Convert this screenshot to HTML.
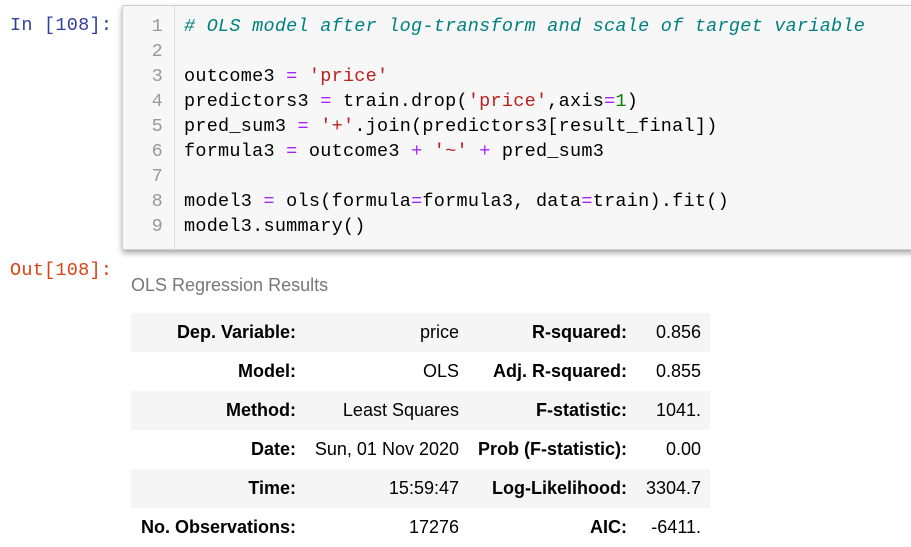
<!DOCTYPE html>
<html><head><meta charset="utf-8"><style>
body{margin:0;width:911px;height:543px;background:#fff;overflow:hidden;position:relative;font-family:"Liberation Sans",sans-serif}
.mono{font-family:"Liberation Mono",monospace;font-size:18.5px;letter-spacing:0.25px}
.prompt{position:absolute;left:10px;color:#303f9f}
.box{position:absolute;left:122px;top:5px;width:795px;height:243px;background:#f7f7f7;border:1px solid #cfcfcf;border-radius:2px;box-shadow:0 3px 6px rgba(0,0,0,.35)}
.gut{position:absolute;left:0;top:0;width:51px;height:100%;border-right:1px solid #ddd}
.ln{position:absolute;width:40px;text-align:right;color:#999;left:0}
.cl{position:absolute;left:61px;color:#000;white-space:pre}
.c{color:#008080;font-style:italic}.s{color:#ba2121}.o{color:#aa22ff}.n{color:#008000}
table{position:absolute;left:131px;top:313px;border-collapse:collapse;font-size:18px;color:#000}
td{height:39px;padding:0;text-align:right}
tr:nth-child(odd){background:#f5f5f5}
th{font-weight:bold;text-align:right;padding:0}
</style></head><body>
<div class="mono prompt" style="top:15px">In [108]:</div>
<div class="box mono">
<div class="gut"></div>
<div class="ln" style="top:10px">1</div><div class="ln" style="top:35px">2</div><div class="ln" style="top:60px">3</div><div class="ln" style="top:85px">4</div><div class="ln" style="top:110px">5</div><div class="ln" style="top:135px">6</div><div class="ln" style="top:160px">7</div><div class="ln" style="top:185px">8</div><div class="ln" style="top:210px">9</div>
<div class="cl" style="top:10px"><span class="c"># OLS model after log-transform and scale of target variable</span></div>
<div class="cl" style="top:60px">outcome3 <span class="o">=</span> <span class="s">'price'</span></div>
<div class="cl" style="top:85px">predictors3 <span class="o">=</span> train.drop(<span class="s">'price'</span>,axis<span class="o">=</span><span class="n">1</span>)</div>
<div class="cl" style="top:110px">pred_sum3 <span class="o">=</span> <span class="s">'+'</span>.join(predictors3[result_final])</div>
<div class="cl" style="top:135px">formula3 <span class="o">=</span> outcome3 <span class="o">+</span> <span class="s">'~'</span> <span class="o">+</span> pred_sum3</div>
<div class="cl" style="top:185px">model3 <span class="o">=</span> ols(formula<span class="o">=</span>formula3, data<span class="o">=</span>train).fit()</div>
<div class="cl" style="top:210px">model3.summary()</div>
</div>
<div class="mono prompt" style="top:260px;color:#d84315">Out[108]:</div>
<div style="position:absolute;left:131px;top:275px;font-size:18px;color:#777">OLS Regression Results</div>
<table>
<colgroup><col style="width:165px"><col style="width:163px"><col style="width:168px"><col style="width:83px"></colgroup>
<tr><th>Dep. Variable:</th><td>price</td><th>R-squared:</th><td style="padding-right:9px">0.856</td></tr>
<tr><th>Model:</th><td>OLS</td><th>Adj. R-squared:</th><td style="padding-right:9px">0.855</td></tr>
<tr><th>Method:</th><td>Least Squares</td><th>F-statistic:</th><td style="padding-right:9px">1041.</td></tr>
<tr><th>Date:</th><td>Sun, 01 Nov 2020</td><th>Prob (F-statistic):</th><td style="padding-right:9px">0.00</td></tr>
<tr><th>Time:</th><td>15:59:47</td><th>Log-Likelihood:</th><td style="padding-right:9px">3304.7</td></tr>
<tr><th>No. Observations:</th><td>17276</td><th>AIC:</th><td style="padding-right:9px">-6411.</td></tr>
</table>
</body></html>
